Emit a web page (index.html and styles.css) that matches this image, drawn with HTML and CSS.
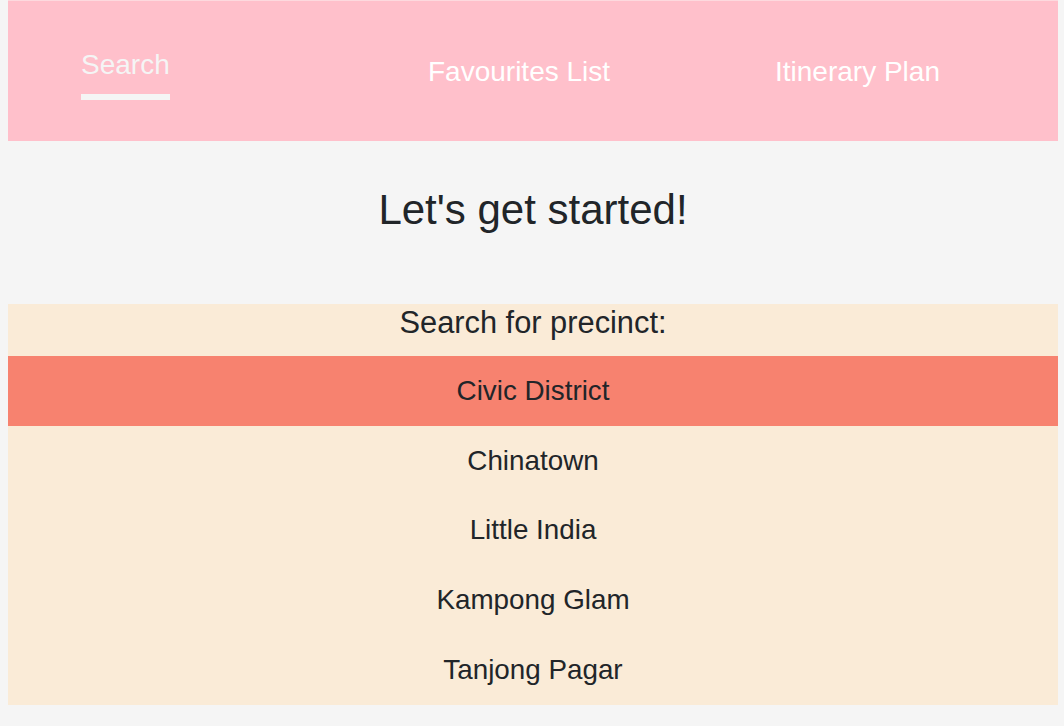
FILE: index.html
```html
<!DOCTYPE html>
<html lang="en">
<head>
<meta charset="utf-8">
<title>Precinct Search</title>
<link rel="stylesheet" href="styles.css">
</head>
<body>
<header class="topbar">
  <nav class="nav">
    <a class="nav-item active" href="#">Search</a>
    <a class="nav-item" href="#">Favourites List</a>
    <a class="nav-item" href="#">Itinerary Plan</a>
  </nav>
</header>
<main>
  <h1 class="title">Let's get started!</h1>
  <section class="precincts">
    <h2 class="precincts-heading">Search for precinct:</h2>
    <ul class="precinct-list">
      <li class="precinct selected">Civic District</li>
      <li class="precinct">Chinatown</li>
      <li class="precinct">Little India</li>
      <li class="precinct">Kampong Glam</li>
      <li class="precinct">Tanjong Pagar</li>
    </ul>
  </section>
</main>
</body>
</html>
```
FILE: styles.css
```css
html, body {
  margin: 0;
  padding: 0;
}
body {
  background: #f5f5f5;
  padding: 0 6px 0 8px;
  font-family: "Liberation Sans", Arial, sans-serif;
  color: #212529;
}
.topbar {
  background: #ffc0cb;
  border-top: 1px solid #fdd9de;
  height: 141px;
  box-sizing: border-box;
  padding-top: 2px;
  display: flex;
  align-items: center;
}
.nav {
  display: grid;
  grid-template-columns: 347px 347px 1fr;
  align-items: center;
  justify-items: start;
  padding-left: 73px;
  width: 100%;
  box-sizing: border-box;
}
.nav-item {
  color: #ffffff;
  text-decoration: none;
  font-size: 28px;
  line-height: 42px;
}
.nav-item.active {
  color: #f5f5f5;
  padding-bottom: 8px;
  border-bottom: 6px solid #f5f5f5;
}
.title {
  margin: 0;
  padding: 44px 0 69px;
  font-size: 42px;
  line-height: 50px;
  font-weight: 400;
  text-align: center;
}
.precincts {
  background: #faebd7;
  text-align: center;
}
.precincts-heading {
  margin: 0;
  padding-bottom: 15px;
  font-size: 30.8px;
  line-height: 37px;
  font-weight: 400;
}
.precinct-list {
  list-style: none;
  margin: 0;
  padding: 0;
}
.precinct {
  font-size: 27.8px;
  line-height: 42px;
  padding: 13.9px 0;
}
.precinct.selected {
  background: #f7826f;
}
```
